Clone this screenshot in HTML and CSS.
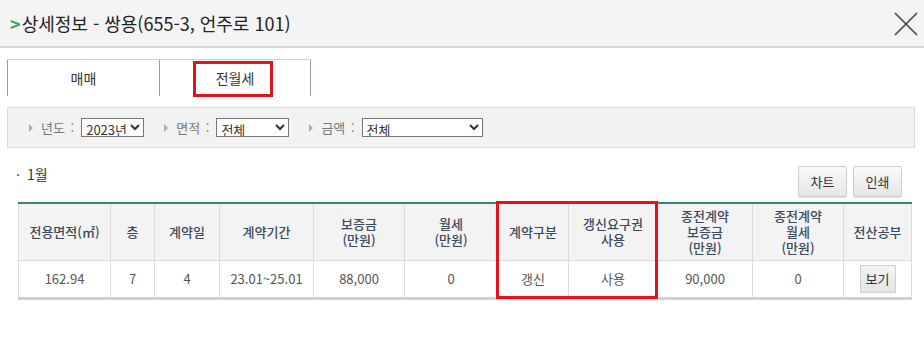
FILE: index.html
```html
<!DOCTYPE html>
<html lang="ko">
<head>
    <meta charset="UTF-8">
    <meta name="viewport" content="width=device-width, initial-scale=1.0">
    <title>상세정보</title>
    <link rel="stylesheet" href="styles.css">
</head>
<body>
    <div class="popup">
        <div class="popup-header">
            <h2 class="popup-title"><span class="title-mark">&gt;</span>상세정보 - 쌍용(655-3, 언주로 101)</h2>
            <button class="close-btn" aria-label="닫기">
                <svg width="24" height="24" viewBox="0 0 24 24">
                    <path d="M1 1 L23 23 M23 1 L1 23" stroke="#444" stroke-width="1.6" fill="none"/>
                </svg>
            </button>
        </div>

        <div class="popup-body">
            <div class="tabs">
                <div class="tab">매매</div>
                <div class="tab active">전월세<span class="mark-box tab-mark"></span></div>
            </div>

            <div class="filter-bar">
                <label class="filter-item">
                    <span class="filter-label">년도 :</span>
                    <select class="select select-year"><option>2023년</option></select>
                </label>
                <label class="filter-item">
                    <span class="filter-label">면적 :</span>
                    <select class="select select-area"><option>전체</option></select>
                </label>
                <label class="filter-item">
                    <span class="filter-label">금액 :</span>
                    <select class="select select-price"><option>전체</option></select>
                </label>
            </div>

            <div class="section">
                <div class="section-top">
                    <h3 class="month-title">1월</h3>
                    <div class="actions">
                        <button class="btn">차트</button>
                        <button class="btn">인쇄</button>
                    </div>
                </div>

                <div class="table-wrap">
                    <table class="deal-table">
                        <colgroup>
                            <col style="width: 92px">
                            <col style="width: 44px">
                            <col style="width: 65px">
                            <col style="width: 94px">
                            <col style="width: 91px">
                            <col style="width: 93px">
                            <col style="width: 71px">
                            <col style="width: 89px">
                            <col style="width: 95px">
                            <col style="width: 91px">
                            <col style="width: 68px">
                        </colgroup>
                        <thead>
                            <tr>
                                <th>전용면적(㎡)</th>
                                <th>층</th>
                                <th>계약일</th>
                                <th>계약기간</th>
                                <th>보증금<br>(만원)</th>
                                <th>월세<br>(만원)</th>
                                <th>계약구분</th>
                                <th>갱신요구권<br>사용</th>
                                <th>종전계약<br>보증금<br>(만원)</th>
                                <th>종전계약<br>월세<br>(만원)</th>
                                <th>전산공부</th>
                            </tr>
                        </thead>
                        <tbody>
                            <tr>
                                <td>162.94</td>
                                <td>7</td>
                                <td>4</td>
                                <td>23.01~25.01</td>
                                <td>88,000</td>
                                <td>0</td>
                                <td>갱신</td>
                                <td>사용</td>
                                <td>90,000</td>
                                <td>0</td>
                                <td><button class="btn btn-small">보기</button></td>
                            </tr>
                        </tbody>
                    </table>
                    <span class="mark-box table-mark"></span>
                </div>
            </div>
        </div>
    </div>
</body>
</html>
```

FILE: styles.css
```css
:root {
    --text: #333;
    --text-light: #666;
    --border: #dcdcdc;
    --teal: #3e7f88;
    --mark: #e8101a;
}

* {
    margin: 0;
    padding: 0;
    box-sizing: border-box;
    font-family: "Noto Sans CJK KR", "Noto Sans", sans-serif;
}

body {
    background: #fff;
    color: var(--text);
}

.popup {
    width: 924px;
    height: 341px;
    overflow: hidden;
}

.popup-header {
    height: 48px;
    background: #f4f4f4;
    border-bottom: 2px solid #d6d6d6;
    display: flex;
    align-items: center;
    justify-content: space-between;
    padding: 0 6px 0 10px;
}

.popup-title {
    font-size: 18px;
    font-weight: 400;
    color: #222;
}

.title-mark {
    color: #3aa55a;
    font-weight: 700;
    margin-right: 1px;
}

.close-btn {
    background: none;
    border: none;
    width: 24px;
    height: 24px;
    margin-top: 2px;
}

.popup-body {
    padding: 11px 9px 0 7px;
}

/* tabs */
.tabs {
    display: flex;
    height: 37px;
    border-top: 1px solid #d0d0d0;
    width: 304px;
}

.tab {
    position: relative;
    width: 152px;
    display: flex;
    align-items: center;
    justify-content: center;
    font-size: 14px;
    color: #333;
    border-left: 1px solid #8fa08f;
}

.tab:last-child {
    border-right: 1px solid #8fa08f;
}

.mark-box {
    position: absolute;
    border: 3px solid var(--mark);
    pointer-events: none;
}

.tab-mark {
    left: 33px;
    top: 1px;
    width: 80px;
    height: 36px;
}

/* filter */
.filter-bar {
    margin-top: 11px;
    height: 41px;
    background: #f2f2f2;
    border: 1px solid var(--border);
    display: flex;
    align-items: center;
    gap: 20px;
    padding-left: 21px;
}

.filter-item {
    display: flex;
    align-items: center;
    font-size: 13px;
    color: #777;
}

.filter-label {
    display: flex;
    align-items: center;
    margin-right: 7px;
    word-spacing: 2px;
}

.filter-label::before {
    content: "";
    border-left: 4px solid #aaa;
    border-top: 4px solid transparent;
    border-bottom: 4px solid transparent;
    margin-right: 8px;
}

.select {
    height: 19px;
    font-size: 13px;
    color: #333;
    border: 1px solid #767676;
    background: #fff;
    padding: 0;
}

.select-year { width: 63px; }
.select-area { width: 73px; }
.select-price { width: 121px; }

/* section */
.section {
    padding: 0 6px 0 11px;
}

.section-top {
    display: flex;
    justify-content: space-between;
    align-items: flex-start;
    margin-top: 16px;
}

.month-title {
    font-size: 14px;
    font-weight: 400;
    color: #333;
}

.month-title::before {
    content: "·";
    margin-left: -2px;
    margin-right: 7px;
    color: #555;
}

.actions {
    display: flex;
    gap: 6px;
    margin-top: 2px;
    margin-right: 7px;
}

.btn {
    width: 49px;
    height: 31px;
    font-size: 13px;
    color: #333;
    background: linear-gradient(#fafafa, #e6e6e6);
    border: 1px solid #cfcfcf;
    border-radius: 2px;
    box-shadow: 0 1px 1px rgba(0, 0, 0, 0.12);
}

.btn-small {
    width: 36px;
    height: 28px;
    background: linear-gradient(#f4f4f4, #e4e4e4);
    border-radius: 0;
    box-shadow: none;
}

/* table */
.table-wrap {
    position: relative;
    margin-top: 5px;
    width: 893px;
}

.deal-table {
    width: 893px;
    table-layout: fixed;
    border-collapse: collapse;
    border-top: 2px solid var(--teal);
    border-bottom: 3px solid #d0d0d0;
}

.deal-table th,
.deal-table td {
    border-left: 1px solid var(--border);
    border-right: 1px solid var(--border);
    text-align: center;
    font-size: 13px;
}

.deal-table th {
    height: 57px;
    background: #f3f3f3;
    color: #3b4a5c;
    font-weight: 500;
    line-height: 16px;
    border-bottom: 1px solid var(--border);
}

.deal-table td {
    height: 38px;
    color: #555;
}

.table-mark {
    left: 478px;
    top: -1px;
    width: 162px;
    height: 98px;
}
```
